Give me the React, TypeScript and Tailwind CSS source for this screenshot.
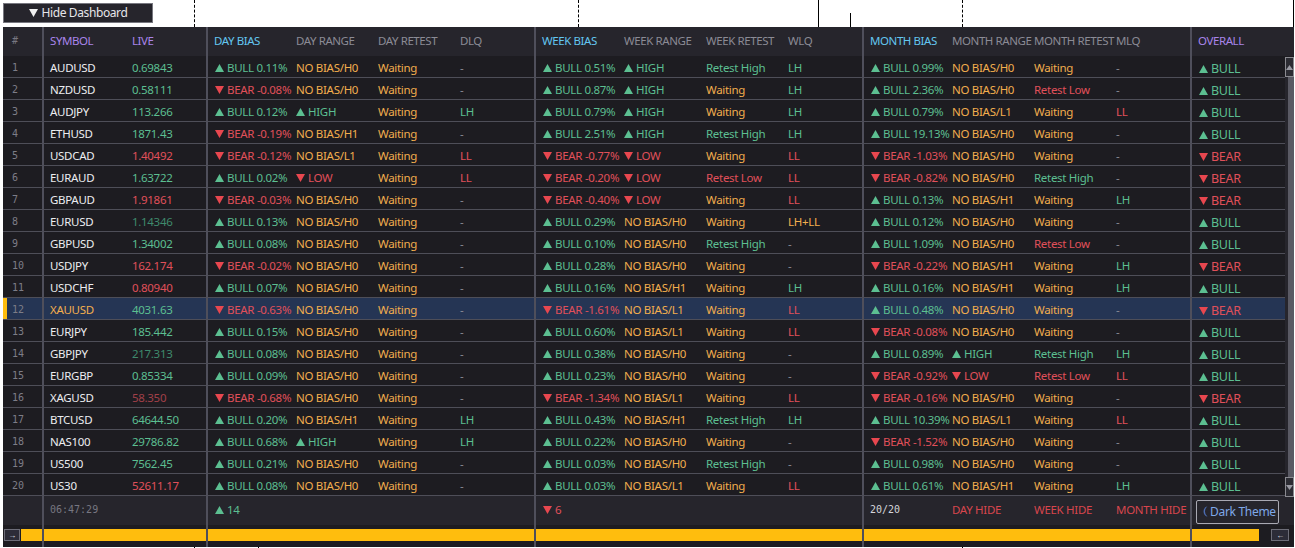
import React from 'react';

// day/week/month blocks: bias, range, retest, liquidity
type Row = [string, string, string, string[], string[], string[], string];

const rows: Row[] = [
  ['AUDUSD', '0.69843', 'g', ['0.11', 'H0', 'W', '-'], ['0.51', 'HIGH', 'RH', 'LH'], ['0.99', 'H0', 'W', '-'], 'BULL'],
  ['NZDUSD', '0.58111', 'g', ['-0.08', 'H0', 'W', '-'], ['0.87', 'HIGH', 'W', 'LH'], ['2.36', 'H0', 'RL', '-'], 'BULL'],
  ['AUDJPY', '113.266', 'g', ['0.12', 'HIGH', 'W', 'LH'], ['0.79', 'HIGH', 'W', 'LH'], ['0.79', 'L1', 'W', 'LL'], 'BULL'],
  ['ETHUSD', '1871.43', 'g', ['-0.19', 'H1', 'W', '-'], ['2.51', 'HIGH', 'RH', 'LH'], ['19.13', 'H0', 'W', '-'], 'BULL'],
  ['USDCAD', '1.40492', 'r', ['-0.12', 'L1', 'W', 'LL'], ['-0.77', 'LOW', 'W', 'LL'], ['-1.03', 'H0', 'W', '-'], 'BEAR'],
  ['EURAUD', '1.63722', 'g', ['0.02', 'LOW', 'W', 'LL'], ['-0.20', 'LOW', 'RL', 'LL'], ['-0.82', 'H0', 'RH', '-'], 'BEAR'],
  ['GBPAUD', '1.91861', 'r', ['-0.03', 'H0', 'W', '-'], ['-0.40', 'LOW', 'W', 'LL'], ['0.13', 'H1', 'W', 'LH'], 'BEAR'],
  ['EURUSD', '1.14346', 'd', ['0.13', 'H0', 'W', '-'], ['0.29', 'H0', 'W', 'LH+LL'], ['0.12', 'H0', 'W', '-'], 'BULL'],
  ['GBPUSD', '1.34002', 'g', ['0.08', 'H0', 'W', '-'], ['0.10', 'H0', 'RH', '-'], ['1.09', 'H0', 'RL', '-'], 'BULL'],
  ['USDJPY', '162.174', 'r', ['-0.02', 'H0', 'W', '-'], ['0.28', 'H0', 'W', '-'], ['-0.22', 'H1', 'W', 'LH'], 'BEAR'],
  ['USDCHF', '0.80940', 'r', ['0.07', 'H0', 'W', '-'], ['0.16', 'H1', 'W', 'LH'], ['0.16', 'H1', 'W', 'LH'], 'BULL'],
  ['XAUUSD', '4031.63', 'g', ['-0.63', 'H0', 'W', '-'], ['-1.61', 'L1', 'W', 'LL'], ['0.48', 'H0', 'W', '-'], 'BEAR'],
  ['EURJPY', '185.442', 'g', ['0.15', 'H0', 'W', '-'], ['0.60', 'L1', 'W', 'LL'], ['-0.08', 'H0', 'W', '-'], 'BULL'],
  ['GBPJPY', '217.313', 'd', ['0.08', 'H0', 'W', '-'], ['0.38', 'H0', 'W', '-'], ['0.89', 'HIGH', 'RH', 'LH'], 'BULL'],
  ['EURGBP', '0.85334', 'g', ['0.09', 'H0', 'W', '-'], ['0.23', 'H0', 'W', '-'], ['-0.92', 'LOW', 'RL', 'LL'], 'BULL'],
  ['XAGUSD', '58.350', 'x', ['-0.68', 'H0', 'W', '-'], ['-1.34', 'L1', 'W', 'LL'], ['-0.16', 'H0', 'W', '-'], 'BEAR'],
  ['BTCUSD', '64644.50', 'g', ['0.20', 'H1', 'W', 'LH'], ['0.43', 'H1', 'RH', 'LH'], ['10.39', 'L1', 'W', 'LL'], 'BULL'],
  ['NAS100', '29786.82', 'g', ['0.68', 'HIGH', 'W', 'LH'], ['0.22', 'H0', 'W', '-'], ['-1.52', 'H0', 'W', '-'], 'BULL'],
  ['US500', '7562.45', 'g', ['0.21', 'H0', 'W', '-'], ['0.03', 'H0', 'RH', '-'], ['0.98', 'H0', 'W', '-'], 'BULL'],
  ['US30', '52611.17', 'r', ['0.08', 'H0', 'W', '-'], ['0.03', 'L1', 'W', 'LL'], ['0.61', 'H1', 'W', 'LH'], 'BULL'],
];

const GRID = 'grid grid-cols-[40px_repeat(14,82px)_1fr]';
const GREEN = 'text-[#5cbf91]';
const RED = 'text-[#e0505a]';
const ORANGE = 'text-[#f2ae4e]';
const MONO = "font-['DejaVu_Sans_Mono',monospace] text-[10px] tracking-normal";

const Tri = ({ up, className = '' }: { up: boolean; className?: string }) => (
  <svg width="9" height="8" viewBox="0 0 9 8" className={`mr-[3px] shrink-0 ${className}`}>
    <path d={up ? 'M4.5 0L9 8H0Z' : 'M0 0H9L4.5 8Z'} fill={up ? '#5cbf91' : '#e8474f'} />
  </svg>
);

const Cell = ({ sep, className = '', children }: { sep?: boolean; className?: string; children?: React.ReactNode }) => (
  <div className={`flex items-center whitespace-nowrap ${sep ? '-ml-px border-l-2 border-[#4f4f5b] pl-[6px]' : 'pl-[7px]'} ${className}`}>
    {children}
  </div>
);

const Bias = ({ v, sep }: { v: string; sep?: boolean }) => {
  const up = !v.startsWith('-');
  return (
    <Cell sep={sep} className={up ? GREEN : RED}>
      <Tri up={up} className="ml-px" />
      {up ? 'BULL' : 'BEAR'} {v}%
    </Cell>
  );
};

const Range = ({ v }: { v: string }) => {
  if (v === 'HIGH') return <Cell className={GREEN}><Tri up />HIGH</Cell>;
  if (v === 'LOW') return <Cell className={RED}><Tri up={false} />LOW</Cell>;
  return <Cell className={ORANGE}>NO BIAS/{v}</Cell>;
};

const Retest = ({ v }: { v: string }) => {
  if (v === 'RH') return <Cell className={GREEN}>Retest High</Cell>;
  if (v === 'RL') return <Cell className={RED}>Retest Low</Cell>;
  return <Cell className={ORANGE}>Waiting</Cell>;
};

const Liq = ({ v }: { v: string }) => {
  const color = v === '-' ? 'text-[#8a8a94]' : v === 'LL' ? RED : v === 'LH' ? GREEN : ORANGE;
  return <Cell className={color}>{v}</Cell>;
};

const Group = ({ data }: { data: string[] }) => (
  <>
    <Bias v={data[0]} sep />
    <Range v={data[1]} />
    <Retest v={data[2]} />
    <Liq v={data[3]} />
  </>
);

const liveColor: Record<string, string> = {
  g: GREEN,
  r: RED,
  d: 'text-[#3f8a6c]',
  x: 'text-[#a14049]',
};

const Head = ({ label, sep, color = 'text-[#8b8b95]' }: { label: string; sep?: boolean; color?: string }) => (
  <Cell sep={sep} className={color}>{label}</Cell>
);

const Dash = ({ x, h, top }: { x: string; h: string; top: string }) => (
  <div className={`absolute w-0 border-l border-dashed border-black ${x} ${h} ${top}`} />
);

const YELLOW = 'h-[12px] bg-[#ffbd0d]';
const ARROW_BTN = 'flex h-[12px] items-center justify-center border border-[#6d6d78] bg-[#2c2c38] text-[8px] leading-none text-[#e4e6f2]';

export default function App() {
  return (
    <div className="relative h-[548px] w-[1295px] overflow-hidden bg-white font-['Noto_Sans','Open_Sans',sans-serif] text-[11.5px] tracking-[-0.3px]">
      <Dash x="left-[194px]" h="h-[27px]" top="top-0" />
      <Dash x="left-[578px]" h="h-[27px]" top="top-0" />
      <Dash x="left-[962px]" h="h-[27px]" top="top-0" />
      <div className="absolute left-[818px] top-0 h-[27px] w-px bg-black" />
      <div className="absolute left-[850px] top-[13px] h-[14px] w-px bg-black" />
      <div className="absolute left-[1293px] top-0 h-[27px] w-px bg-black" />
      <Dash x="left-[194px]" h="h-[1px]" top="top-[547px]" />
      <Dash x="left-[258px]" h="h-[1px]" top="top-[547px]" />
      <Dash x="left-[962px]" h="h-[1px]" top="top-[547px]" />

      <div className="flex h-[27px] items-start pl-[3px] pt-[3px]">
        <button className="flex h-[20px] w-[150px] items-center justify-center gap-1 border border-[#77777f] bg-[#26252c] text-[12px] tracking-[-0.4px] text-[#e6e6ea]">
          <svg width="9" height="8" viewBox="0 0 9 8"><path d="M0 0H9L4.5 8Z" fill="#f0f0f0" /></svg>
          Hide Dashboard
        </button>
      </div>

      <div className="relative ml-[3px] mr-[1px] h-[520px] bg-[#1d1c21]">
        <div className={`${GRID} h-[29px] bg-[#26252c] tracking-[-0.42px] [&>div]:pb-[2px]`}>
          <Cell className={`pl-[9px] ${MONO} text-[#777781]`}>#</Cell>
          <Head label="SYMBOL" sep color="text-[#a884ea]" />
          <Head label="LIVE" color="text-[#a884ea]" />
          <Head label="DAY BIAS" sep color="text-[#63c6f0]" />
          <Head label="DAY RANGE" />
          <Head label="DAY RETEST" />
          <Head label="DLQ" />
          <Head label="WEEK BIAS" sep color="text-[#63c6f0]" />
          <Head label="WEEK RANGE" />
          <Head label="WEEK RETEST" />
          <Head label="WLQ" />
          <Head label="MONTH BIAS" sep color="text-[#63c6f0]" />
          <Head label="MONTH RANGE" />
          <Head label="MONTH RETEST" />
          <Head label="MLQ" />
          <Head label="OVERALL" sep color="text-[#a884ea]" />
        </div>

        {rows.map((r, i) => {
          const active = r[0] === 'XAUUSD';
          return (
            <div
              key={r[0]}
              className={`${GRID} h-[22px] border-b border-[#4e4e58] [&>div]:pt-[2px] ${active ? 'bg-[#253554]' : 'bg-[#1d1c21]'}`}
            >
              <Cell className={`${MONO} text-[#7d7d87] ${active ? 'border-l-4 border-[#ffbd0d] !pl-[5px]' : '!pl-[9px]'}`}>{i + 1}</Cell>
              <Cell sep className={active ? 'text-[#f2ae4e]' : 'text-[#ecedf0]'}>{r[0]}</Cell>
              <Cell className={liveColor[r[2]]}>{r[1]}</Cell>
              <Group data={r[3]} />
              <Group data={r[4]} />
              <Group data={r[5]} />
              <Cell sep className={`text-[12.5px] ${r[6] === 'BULL' ? GREEN : RED}`}>
                <div className="mt-[2px] flex items-center leading-[14px]">
                  <Tri up={r[6] === 'BULL'} className="ml-px" />
                  {r[6]}
                </div>
              </Cell>
            </div>
          );
        })}

        <div className={`${GRID} h-[29px] bg-[#26252c] [&>div]:pb-[2px]`}>
          <Cell />
          <Cell sep className={`${MONO} text-[#777781]`}>06:47:29</Cell>
          <Cell />
          <Cell sep className={GREEN}><Tri up className="ml-px" />14</Cell>
          <Cell /><Cell /><Cell />
          <Cell sep className={RED}><Tri up={false} className="ml-px" />6</Cell>
          <Cell /><Cell /><Cell />
          <Cell sep className={`${MONO} text-[#d5d5da]`}>20/20</Cell>
          <Cell className="text-[#d8454d]">DAY HIDE</Cell>
          <Cell className="text-[#d8454d]">WEEK HIDE</Cell>
          <Cell className="text-[#d8454d]">MONTH HIDE</Cell>
          <Cell sep className="!pl-[4px] !pb-0">
            <div className="mt-[2px] flex h-[24px] w-[83px] items-center gap-[2px] rounded-[2px] border border-[#a9a9b3] pl-[5px] text-[12px] text-[#7fa8e8]">
              <svg width="6" height="11" viewBox="0 0 6 11" className="shrink-0">
                <path d="M5.5 0.3A5.4 5.4 0 0 0 5.5 10.7A6.6 6.6 0 0 1 5.5 0.3Z" fill="#4c6cb0" />
              </svg>
              Dark Theme
            </div>
          </Cell>
        </div>

        <div className={`${GRID} h-[22px] bg-[#1d1c21]`}>
          <div className="flex items-start gap-[1px] pt-[4px] pl-px">
            <div className={`${ARROW_BTN} w-[16px]`}>→</div>
            <div className={`${YELLOW} flex-1`} />
          </div>
          {Array.from({ length: 14 }).map((_, i) => {
            const sep = i === 0 || i === 2 || i === 6 || i === 10;
            return (
              <div key={i} className={`pt-[4px] ${sep ? '-ml-px border-l-2 border-[#4f4f5b]' : ''}`}>
                <div className={YELLOW} />
              </div>
            );
          })}
          <div className="-ml-px flex items-start border-l-2 border-[#4f4f5b] pt-[4px]">
            <div className={`${YELLOW} w-[67px]`} />
            <div className={`${ARROW_BTN} ml-[12px] w-[18px]`}>←</div>
          </div>
        </div>

        {/* vertical scrollbar sits over the last column */}
        <div className="absolute right-0 top-[30px] flex h-[440px] w-[9px] flex-col bg-[#26252c]">
          <div className="flex h-[20px] items-center justify-center border border-[#8a8a90] bg-[#2c2c33]">
            <svg width="7" height="5" viewBox="0 0 7 5"><path d="M3.5 0L7 5H0Z" fill="#9a9aa3" /></svg>
          </div>
          <div className="ml-[3px] w-[6px] flex-1 bg-[#5a5a64]" />
          <div className="flex h-[20px] items-center justify-center border border-[#8a8a90] bg-[#2c2c33]">
            <svg width="7" height="5" viewBox="0 0 7 5"><path d="M0 0H7L3.5 5Z" fill="#9a9aa3" /></svg>
          </div>
        </div>
      </div>
    </div>
  );
}
